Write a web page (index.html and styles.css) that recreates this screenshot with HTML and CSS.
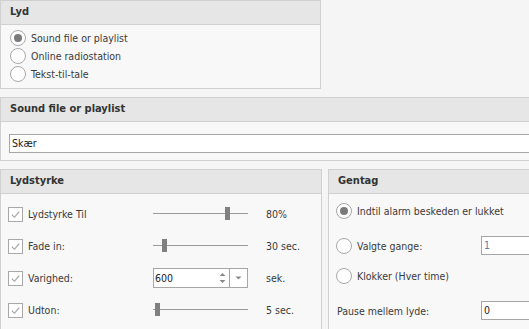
FILE: index.html
```html
<!DOCTYPE html>
<html lang="da">
<head>
    <meta charset="UTF-8">
    <title>Alarm lyd</title>
    <link rel="stylesheet" href="styles.css">
</head>
<body>
    <div class="page">
        <!-- Lyd -->
        <div class="group group-lyd">
            <div class="group-header">Lyd</div>
            <div class="group-body lyd-body">
                <div class="radio-row"><span class="radio checked"></span>Sound file or playlist</div>
                <div class="radio-row"><span class="radio"></span>Online radiostation</div>
                <div class="radio-row"><span class="radio"></span>Tekst-til-tale</div>
            </div>
        </div>

        <!-- Sound file -->
        <div class="group group-file open-right">
            <div class="group-header">Sound file or playlist</div>
            <div class="group-body file-body">
                <div class="textbox wide">Skær</div>
            </div>
        </div>

        <div class="bottom-row">
            <!-- Lydstyrke -->
            <div class="group group-volume">
                <div class="group-header">Lydstyrke</div>
                <div class="group-body volume-body">
                    <div class="vol-row">
                        <label class="check-label"><span class="checkbox"><svg viewBox="0 0 14 14"><path d="M3 7.2 L5.8 10 L11 3.8" /></svg></span>Lydstyrke Til</label>
                        <div class="slider"><span class="track"></span><span class="thumb" style="left: 72px"></span></div>
                        <span class="value">80%</span>
                    </div>
                    <div class="vol-row">
                        <label class="check-label"><span class="checkbox"><svg viewBox="0 0 14 14"><path d="M3 7.2 L5.8 10 L11 3.8" /></svg></span>Fade in:</label>
                        <div class="slider"><span class="track"></span><span class="thumb" style="left: 9px"></span></div>
                        <span class="value">30 sec.</span>
                    </div>
                    <div class="vol-row">
                        <label class="check-label"><span class="checkbox"><svg viewBox="0 0 14 14"><path d="M3 7.2 L5.8 10 L11 3.8" /></svg></span>Varighed:</label>
                        <div class="spin-edit">
                            <span class="spin-text">600</span>
                            <span class="spin-arrows">
                                <svg viewBox="0 0 9 14"><path d="M1.5 5 L4.5 2 L7.5 5 Z M1.5 9 L4.5 12 L7.5 9 Z" /></svg>
                            </span>
                            <span class="spin-drop">
                                <svg viewBox="0 0 9 6"><path d="M1.5 1.5 L7.5 1.5 L4.5 4.5 Z" /></svg>
                            </span>
                        </div>
                        <span class="value">sek.</span>
                    </div>
                    <div class="vol-row">
                        <label class="check-label"><span class="checkbox"><svg viewBox="0 0 14 14"><path d="M3 7.2 L5.8 10 L11 3.8" /></svg></span>Udton:</label>
                        <div class="slider"><span class="track"></span><span class="thumb" style="left: 2px"></span></div>
                        <span class="value">5 sec.</span>
                    </div>
                </div>
            </div>

            <!-- Gentag -->
            <div class="group group-repeat open-right">
                <div class="group-header">Gentag</div>
                <div class="group-body repeat-body">
                    <div class="radio-row rep-first"><span class="radio checked"></span>Indtil alarm beskeden er lukket</div>
                    <div class="field-row rep-count">
                        <span class="field-label"><span class="radio"></span>Valgte gange:</span>
                        <div class="textbox small disabled">1</div>
                    </div>
                    <div class="radio-row rep-clock"><span class="radio"></span>Klokker (Hver time)</div>
                    <div class="field-row pause-row">
                        <span class="field-label pause-label">Pause mellem lyde:</span>
                        <div class="textbox small">0</div>
                    </div>
                </div>
            </div>
        </div>
    </div>
</body>
</html>
```

FILE: styles.css
```css
* {
    margin: 0;
    padding: 0;
    box-sizing: border-box;
}

body {
    font-family: "DejaVu Sans Condensed", "DejaVu Sans", sans-serif;
    font-size: 10.5px;
    color: #3a3a3a;
    background: #f5f5f5;
    overflow: hidden;
}

.page {
    width: 529px;
    display: flex;
    flex-direction: column;
    gap: 8px;
}

/* Group boxes */
.group {
    border: 1px solid #d0d0d0;
    background: #f8f8f8;
    overflow: hidden;
}

.group.open-right {
    border-right: none;
}

.group-header {
    height: 24px;
    line-height: 22px;
    padding-left: 9px;
    background: #e6e6e6;
    border-bottom: 1px solid #d0d0d0;
    font-weight: bold;
    font-size: 11px;
    color: #333;
}

.group-lyd {
    width: 321px;
    height: 89px;
}

.lyd-body {
    padding: 4px 0 0 9px;
}

.radio-row {
    display: flex;
    align-items: center;
    height: 18px;
}

.radio {
    width: 16px;
    height: 16px;
    border: 1px solid #a8a8a8;
    border-radius: 50%;
    background: #fff;
    margin-right: 5px;
    display: flex;
    align-items: center;
    justify-content: center;
    flex-shrink: 0;
}

.radio.checked::after {
    content: "";
    width: 8px;
    height: 8px;
    border-radius: 50%;
    background: #7a7a7a;
}

.group-file {
    height: 64px;
}

.file-body {
    padding: 12px 0 0 8px;
}

.textbox {
    height: 19px;
    line-height: 17px;
    border: 1px solid #a6a6a6;
    background: #fff;
    padding-left: 2px;
    color: #222;
    flex-shrink: 0;
}

.textbox.wide {
    width: 540px;
}

.textbox.small {
    width: 60px;
}

.textbox.disabled {
    color: #5b7ea0;
}

.bottom-row {
    display: flex;
    gap: 6px;
}

/* Lydstyrke */
.group-volume {
    width: 322px;
    height: 161px;
    flex-shrink: 0;
}

.volume-body {
    padding: 4px 0 0 7px;
}

.vol-row {
    display: flex;
    align-items: center;
    height: 32px;
}

.check-label {
    display: flex;
    align-items: center;
    width: 145px;
}

.checkbox {
    width: 15px;
    height: 15px;
    border: 1px solid #a8a8a8;
    background: #fff;
    margin-right: 5px;
    display: flex;
}

.checkbox svg {
    width: 13px;
    height: 13px;
}

.checkbox path {
    fill: none;
    stroke: #a0a0a0;
    stroke-width: 1.2;
}

.slider {
    position: relative;
    width: 95px;
    height: 14px;
}

.slider .track {
    position: absolute;
    left: 0;
    right: 0;
    top: 6px;
    height: 1px;
    background: #9a9a9a;
}

.slider .thumb {
    position: absolute;
    top: 0;
    width: 5px;
    height: 13px;
    background: #808080;
}

.value {
    margin-left: 18px;
}

.spin-edit {
    display: flex;
    width: 95px;
    height: 20px;
    border: 1px solid #a6a6a6;
    background: #fff;
}

.spin-text {
    flex: 1;
    line-height: 18px;
    padding-left: 1px;
    color: #222;
}

.spin-arrows {
    width: 14px;
    display: flex;
    align-items: center;
    justify-content: center;
}

.spin-arrows svg {
    width: 9px;
    height: 14px;
}

.spin-drop {
    width: 18px;
    border-left: 1px solid #a6a6a6;
    display: flex;
    align-items: center;
    justify-content: center;
}

.spin-drop svg {
    width: 9px;
    height: 6px;
}

.spin-edit path {
    fill: #8a8a8a;
}

/* Gentag */
.group-repeat {
    flex: 1;
    height: 161px;
}

.repeat-body {
    padding: 8px 0 0 7px;
}

.field-row {
    display: flex;
    align-items: center;
}

.field-label {
    display: flex;
    align-items: center;
    width: 145px;
    flex-shrink: 0;
}

.rep-count {
    margin-top: 16px;
}

.rep-clock {
    margin-top: 12px;
}

.pause-row {
    margin-top: 16px;
}

.pause-label {
    padding-left: 1px;
}
```
